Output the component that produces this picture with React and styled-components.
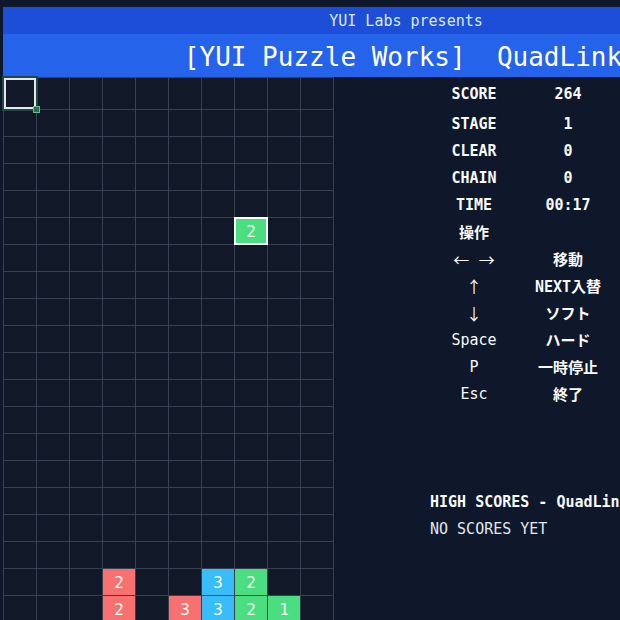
import React from 'react'
import styled, { createGlobalStyle, css } from 'styled-components'

const GlobalStyle = createGlobalStyle`
  html, body {
    margin: 0;
    background: #0f172a;
    overflow: hidden;
  }
`

const COLS = 10
const ROWS = 20

const tileColors = {
  red: '#f87171',
  blue: '#38bdf8',
  green: '#4ade80',
}

// settled blocks: [row, col, color, number]
const stack = [
  [18, 3, 'red', 2],
  [18, 6, 'blue', 3],
  [18, 7, 'green', 2],
  [19, 3, 'red', 2],
  [19, 5, 'red', 3],
  [19, 6, 'blue', 3],
  [19, 7, 'green', 2],
  [19, 8, 'green', 1],
]

const falling = { row: 5, col: 7, color: 'green', num: 2 }

const stats = [
  ['SCORE', '264'],
  ['STAGE', '1'],
  ['CLEAR', '0'],
  ['CHAIN', '0'],
  ['TIME', '00:17'],
]

const keys = [
  ['← →', '移動', true],
  ['↑', 'NEXT入替', true],
  ['↓', 'ソフト', true],
  ['Space', 'ハード'],
  ['P', '一時停止'],
  ['Esc', '終了'],
]

const mono = `"DejaVu Sans Mono", "Noto Sans CJK JP", monospace`

const Page = styled.div`
  width: 806px;
  padding: 7px 0 0 3px;
  font-family: ${mono};
  color: #f8fafc;
`

const Presents = styled.div`
  height: 27px;
  background: #1d4ed8;
  color: #dbeafe;
  font-size: 15px;
  display: flex;
  align-items: center;
  justify-content: center;
  padding-top: 1px;
  box-sizing: border-box;
`

const TitleBar = styled.h1`
  margin: 0;
  height: 43px;
  background: #2563eb;
  color: #ffffff;
  font-size: 26px;
  font-weight: normal;
  white-space: pre;
  display: flex;
  align-items: center;
  justify-content: center;
  padding: 3px 6px 0 0;
  box-sizing: border-box;
`

const Main = styled.div`
  display: flex;
  align-items: flex-start;
`

const Board = styled.div`
  display: grid;
  grid-template-columns: repeat(${COLS}, 32px);
  grid-template-rows: 31px repeat(${ROWS - 1}, 26px);
  gap: 1px;
  padding: 1px;
  background: #374151;
`

const Cell = styled.div`
  position: relative;
  background: ${(p) => (p.$color ? tileColors[p.$color] : '#111827')};
  color: #f0fdf4;
  font-size: 16px;
  display: flex;
  align-items: center;
  justify-content: center;

  ${(p) =>
    p.$active &&
    css`
      z-index: 1;
      box-shadow: 0 0 0 1px #ffffff, inset 0 0 0 1px #ffffff;
    `}

  ${(p) =>
    p.$cursor &&
    css`
      z-index: 2;
      box-shadow: inset 0 0 0 2px #e5e7eb, 0 0 0 2px #1f4a43;
    `}
`

const CursorHandle = styled.span`
  position: absolute;
  right: -4px;
  bottom: -4px;
  width: 5px;
  height: 5px;
  background: #2f6e52;
  border: 1px solid #5fbf8e;
`

const Side = styled.div`
  margin-left: 96px;
  padding-top: 3px;
`

const Table = styled.div`
  display: grid;
  grid-template-columns: 88px 100px;
  grid-template-rows: 30px;
  grid-auto-rows: 27px;
  align-items: center;
  justify-items: center;
  font-size: 15px;
`

const Label = styled.span`
  font-weight: ${(p) => (p.$light ? 'normal' : 'bold')};
  white-space: pre;
  margin-bottom: ${(p) => (p.$first ? '3px' : '0')};
  ${(p) =>
    p.$arrow &&
    css`
      font-family: "Noto Sans CJK JP", sans-serif;
      font-size: 16px;
      word-spacing: 6px;
    `}
`

const Value = styled.span`
  font-weight: bold;
  margin-bottom: ${(p) => (p.$first ? '3px' : '0')};
`

const Scores = styled.div`
  margin-top: 82px;
  font-size: 15px;
  line-height: 27px;
  white-space: nowrap;
`

const ScoresTitle = styled.div`
  font-weight: bold;
`

const Empty = styled.div`
  color: #e2e8f0;
`

function Grid() {
  const cells = []
  for (let r = 0; r < ROWS; r++) {
    for (let c = 0; c < COLS; c++) {
      const block = stack.find(([br, bc]) => br === r && bc === c)
      const isFalling = falling.row === r && falling.col === c
      const isCursor = r === 0 && c === 0
      cells.push(
        <Cell
          key={`${r}-${c}`}
          $color={isFalling ? falling.color : block && block[2]}
          $active={isFalling}
          $cursor={isCursor}
        >
          {isFalling ? falling.num : block && block[3]}
          {isCursor && <CursorHandle />}
        </Cell>
      )
    }
  }
  return <Board>{cells}</Board>
}

export default function App() {
  return (
    <Page>
      <GlobalStyle />
      <Presents>YUI Labs presents</Presents>
      <TitleBar>{'[YUI Puzzle Works]  QuadLink'}</TitleBar>
      <Main>
        <Grid />
        <Side>
          <Table>
            {stats.map(([label, value], i) => (
              <React.Fragment key={label}>
                <Label $first={i === 0}>{label}</Label>
                <Value $first={i === 0}>{value}</Value>
              </React.Fragment>
            ))}
            <Label>操作</Label>
            <span />
            {keys.map(([key, action, arrow]) => (
              <React.Fragment key={key}>
                <Label $light $arrow={arrow}>{key}</Label>
                <Value>{action}</Value>
              </React.Fragment>
            ))}
          </Table>
          <Scores>
            <ScoresTitle>HIGH SCORES - QuadLink</ScoresTitle>
            <Empty>NO SCORES YET</Empty>
          </Scores>
        </Side>
      </Main>
    </Page>
  )
}
